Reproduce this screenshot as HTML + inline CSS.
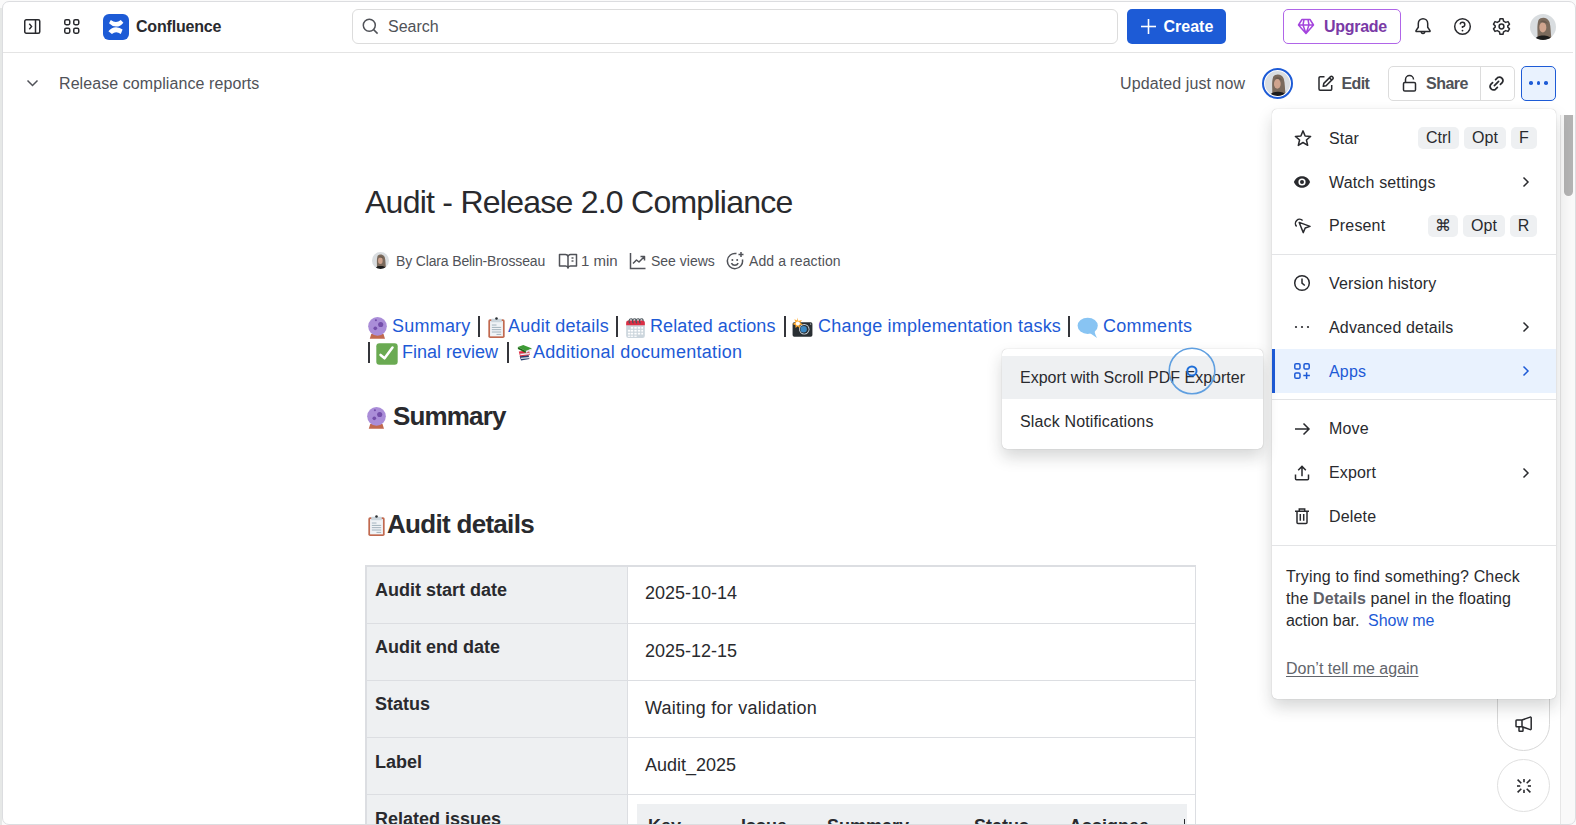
<!DOCTYPE html>
<html><head><meta charset="utf-8"><title>Audit - Release 2.0 Compliance</title>
<style>
html,body{margin:0;padding:0;}
body{width:1576px;height:825px;overflow:hidden;position:relative;background:#f7f7f7;font-family:"Liberation Sans",sans-serif;}
.t{position:absolute;white-space:nowrap;font-family:"Liberation Sans",sans-serif;}
.b{position:absolute;}
svg.b{overflow:visible;}
</style></head><body>
<div class="b" style="left:2px;top:1px;width:1574px;height:824px;background:#fff;border-radius:7px;"></div>
<div class="b" style="left:3px;top:52px;width:1570px;height:1px;background:#e4e4e4;"></div>
<svg class="b" style="left:23px;top:18px;" width="18" height="17" viewBox="0 0 18 17"><rect x="1.75" y="1.75" width="15" height="13.5" rx="1.5" fill="none" stroke="#292a2e" stroke-width="1.5"/><line x1="12.5" y1="1.75" x2="12.5" y2="15.25" stroke="#292a2e" stroke-width="1.5"/><path d="M6.3 5.7 L8.6 8.5 L6.3 11.3" fill="none" stroke="#292a2e" stroke-width="1.4"/></svg>
<svg class="b" style="left:63px;top:18px;" width="18" height="17" viewBox="0 0 18 17"><rect x="1.75" y="1.75" width="5" height="5" rx="1.4" fill="none" stroke="#292a2e" stroke-width="1.5"/><rect x="1.75" y="10.25" width="5" height="5" rx="1.4" fill="none" stroke="#292a2e" stroke-width="1.5"/><rect x="10.75" y="1.75" width="5" height="5" rx="1.4" fill="none" stroke="#292a2e" stroke-width="1.5"/><rect x="10.75" y="10.25" width="5" height="5" rx="1.4" fill="none" stroke="#292a2e" stroke-width="1.5"/></svg>
<div class="b" style="left:102.7px;top:13.7px;width:26px;height:26px;background:#1d5bd6;border-radius:6px;"></div>
<svg class="b" style="left:102.7px;top:13.7px;" width="26" height="26" viewBox="0 0 26 26"><path d="M6 9.3 L7.8 6 Q13 10 17.8 6 L20.4 8.7 Q17 12.8 13 12.6 Q9 12.4 6 9.3 Z" fill="#fff"/><path d="M5.4 17.3 Q9 13 13.2 13.2 Q17 13.4 19.6 15.6 L17.8 20 Q13 16.5 8.9 20 Z" fill="#fff"/></svg>
<div class="t" style="left:136px;top:17px;font-size:16px;line-height:20px;color:#292a2e;font-weight:700;letter-spacing:-0.2px;">Confluence</div>
<div class="b" style="left:352px;top:9px;width:766px;height:35px;border:1px solid #dcdcdc;border-radius:6px;box-sizing:border-box;"></div>
<svg class="b" style="left:362px;top:18px;" width="17" height="17" viewBox="0 0 17 17"><circle cx="7.3" cy="7.3" r="6" fill="none" stroke="#505258" stroke-width="1.5"/><line x1="11.6" y1="11.6" x2="15.6" y2="15.6" stroke="#505258" stroke-width="1.5"/></svg>
<div class="t" style="left:388px;top:17px;font-size:16px;line-height:20px;color:#505258;">Search</div>
<div class="b" style="left:1127px;top:9px;width:99px;height:35px;background:#1d5bd6;border-radius:5px;"></div>
<svg class="b" style="left:1140px;top:18px;" width="17" height="17" viewBox="0 0 17 17"><line x1="8.5" y1="1" x2="8.5" y2="16" stroke="#fff" stroke-width="1.6"/><line x1="1" y1="8.5" x2="16" y2="8.5" stroke="#fff" stroke-width="1.6"/></svg>
<div class="t" style="left:1163.5px;top:17px;font-size:16px;line-height:20px;color:#fff;font-weight:700;">Create</div>
<div class="b" style="left:1283px;top:9px;width:118px;height:35px;border:1px solid #b065e8;border-radius:5px;box-sizing:border-box;"></div>
<svg class="b" style="left:1297px;top:18px;" width="18" height="17" viewBox="0 0 18 17"><path d="M5 1.5 H13 L16.5 7 L9 15.5 L1.5 7 Z M1.5 7 H16.5 M7 1.5 L6 7 L9 15.5 L12 7 L11 1.5" fill="none" stroke="#a444dd" stroke-width="1.5" stroke-linejoin="round"/></svg>
<div class="t" style="left:1324px;top:17px;font-size:16px;line-height:20px;color:#7a3aa6;font-weight:700;letter-spacing:-0.3px;">Upgrade</div>
<svg class="b" style="left:1414px;top:17px;" width="18" height="19" viewBox="0 0 18 19"><path d="M4.3 10.3 V6.4 A4.7 4.7 0 0 1 13.7 6.4 V10.3 L16 13.6 V14.4 H2 V13.6 Z" fill="none" stroke="#292a2e" stroke-width="1.5" stroke-linejoin="round"/><path d="M7.2 14.6 A1.8 1.8 0 0 0 10.8 14.6" fill="none" stroke="#292a2e" stroke-width="1.5"/></svg>
<svg class="b" style="left:1453px;top:17px;" width="19" height="19" viewBox="0 0 19 19"><circle cx="9.5" cy="9.5" r="7.8" fill="none" stroke="#292a2e" stroke-width="1.5"/><path d="M7.2 7.4 A2.3 2.3 0 1 1 9.5 9.8 V11" fill="none" stroke="#292a2e" stroke-width="1.5"/><circle cx="9.5" cy="13.6" r="0.9" fill="#292a2e"/></svg>
<svg class="b" style="left:1492px;top:17px;" width="19" height="19" viewBox="0 0 19 19"><path d="M8 1.8 H11 L11.6 4.2 L13.7 5.4 L16 4.6 L17.5 7.2 L15.8 8.9 V10.1 L17.5 11.8 L16 14.4 L13.7 13.6 L11.6 14.8 L11 17.2 H8 L7.4 14.8 L5.3 13.6 L3 14.4 L1.5 11.8 L3.2 10.1 V8.9 L1.5 7.2 L3 4.6 L5.3 5.4 L7.4 4.2 Z" fill="none" stroke="#292a2e" stroke-width="1.5" stroke-linejoin="round"/><circle cx="9.5" cy="9.5" r="2.4" fill="none" stroke="#292a2e" stroke-width="1.5"/></svg>
<svg class="b" style="left:1530px;top:14px;" width="26" height="26" viewBox="0 0 26 26"><defs><clipPath id="c15300"><circle cx="13" cy="13" r="13"/></clipPath></defs><g clip-path="url(#c15300)"><rect width="26" height="26" fill="#d9dde0"/><path d="M8.5 6 C11 2.5 17.5 2.8 19.5 8 C21 13 20.5 19 21.5 25 L7.5 25 C8 19 6.5 12 8.5 6 Z" fill="#7a6a5c"/><ellipse cx="12.8" cy="13.4" rx="3.5" ry="5" fill="#d0a48e"/><path d="M10 7.5 C12.5 5.5 17 6.5 17.8 10 C16 8.5 12.5 8 10 7.5 Z" fill="#6a5a4e"/><path d="M4.5 27 C5.5 22.5 9 21.5 13 21.5 C17.5 21.5 21 22.5 22.5 27 Z" fill="#1c1c1c"/></g></svg>
<svg class="b" style="left:26px;top:78px;" width="13" height="10" viewBox="0 0 13 10"><path d="M1.5 2.5 L6.5 7.5 L11.5 2.5" fill="none" stroke="#505258" stroke-width="1.5"/></svg>
<div class="t" style="left:59px;top:74px;font-size:16px;line-height:20px;color:#505258;letter-spacing:0.08px;">Release compliance reports</div>
<div class="t" style="left:1120px;top:74px;font-size:16px;line-height:20px;color:#505258;letter-spacing:0.1px;">Updated just now</div>
<div class="b" style="left:1262px;top:68px;width:31px;height:31px;border:2px solid #1d5bd6;border-radius:50%;box-sizing:border-box;"></div>
<svg class="b" style="left:1265px;top:71px;" width="25" height="25" viewBox="0 0 26 26"><defs><clipPath id="c12650"><circle cx="13" cy="13" r="13"/></clipPath></defs><g clip-path="url(#c12650)"><rect width="26" height="26" fill="#d9dde0"/><path d="M8.5 6 C11 2.5 17.5 2.8 19.5 8 C21 13 20.5 19 21.5 25 L7.5 25 C8 19 6.5 12 8.5 6 Z" fill="#7a6a5c"/><ellipse cx="12.8" cy="13.4" rx="3.5" ry="5" fill="#d0a48e"/><path d="M10 7.5 C12.5 5.5 17 6.5 17.8 10 C16 8.5 12.5 8 10 7.5 Z" fill="#6a5a4e"/><path d="M4.5 27 C5.5 22.5 9 21.5 13 21.5 C17.5 21.5 21 22.5 22.5 27 Z" fill="#1c1c1c"/></g></svg>
<svg class="b" style="left:1317px;top:74px;" width="18" height="18" viewBox="0 0 18 18"><path d="M7.5 2.8 H3.2 A1.2 1.2 0 0 0 2 4 V15 A1.2 1.2 0 0 0 3.2 16.2 H13.5 A1.2 1.2 0 0 0 14.7 15 V11" fill="none" stroke="#292a2e" stroke-width="1.5"/><path d="M6.2 12.3 L6.8 9.4 L13.6 2.6 A1.2 1.2 0 0 1 15.3 2.6 L15.9 3.2 A1.2 1.2 0 0 1 15.9 4.9 L9.1 11.7 Z M12.4 3.8 L14.7 6.1" fill="none" stroke="#292a2e" stroke-width="1.5" stroke-linejoin="round"/></svg>
<div class="t" style="left:1341.5px;top:74px;font-size:16px;line-height:20px;color:#505258;font-weight:700;letter-spacing:-0.6px;">Edit</div>
<div class="b" style="left:1388px;top:66px;width:127px;height:35px;border:1px solid #dcdcdc;border-radius:5px;box-sizing:border-box;"></div>
<div class="b" style="left:1480px;top:67px;width:1px;height:33px;background:#dcdcdc;"></div>
<svg class="b" style="left:1401px;top:74px;" width="17" height="19" viewBox="0 0 17 19"><path d="M4.5 8.5 V5.5 A4 4 0 0 1 12.5 5.5" fill="none" stroke="#292a2e" stroke-width="1.5"/><rect x="2.5" y="8.5" width="12" height="8.5" rx="1.3" fill="none" stroke="#292a2e" stroke-width="1.5"/></svg>
<div class="t" style="left:1426px;top:74px;font-size:16px;line-height:20px;color:#505258;font-weight:700;letter-spacing:-0.5px;">Share</div>
<svg class="b" style="left:1488px;top:74.5px;" width="17" height="17" viewBox="0 0 17 17"><g fill="none" stroke="#292a2e" stroke-width="1.7" stroke-linecap="round"><path d="M6.4 10.6 L10.6 6.4"/><path d="M7.6 4.6 L9.6 2.6 A3.5 3.5 0 0 1 14.4 7.4 L12.4 9.4"/><path d="M9.4 12.4 L7.4 14.4 A3.5 3.5 0 0 1 2.6 9.6 L4.6 7.6"/></g></svg>
<div class="b" style="left:1521px;top:66px;width:35px;height:35px;background:#e9f2fe;border:1px solid #1d5bd6;border-radius:5px;box-sizing:border-box;"></div>
<div class="b" style="left:1529.25px;top:81.25px;width:3.5px;height:3.5px;background:#1d5bd6;border-radius:50%;"></div>
<div class="b" style="left:1536.75px;top:81.25px;width:3.5px;height:3.5px;background:#1d5bd6;border-radius:50%;"></div>
<div class="b" style="left:1544.25px;top:81.25px;width:3.5px;height:3.5px;background:#1d5bd6;border-radius:50%;"></div>
<div class="t" style="left:365px;top:182px;font-size:32px;line-height:40px;color:#292a2e;letter-spacing:-0.75px;">Audit - Release 2.0 Compliance</div>
<svg class="b" style="left:372px;top:252px;" width="17" height="17" viewBox="0 0 26 26"><defs><clipPath id="c3720"><circle cx="13" cy="13" r="13"/></clipPath></defs><g clip-path="url(#c3720)"><rect width="26" height="26" fill="#d9dde0"/><path d="M8.5 6 C11 2.5 17.5 2.8 19.5 8 C21 13 20.5 19 21.5 25 L7.5 25 C8 19 6.5 12 8.5 6 Z" fill="#7a6a5c"/><ellipse cx="12.8" cy="13.4" rx="3.5" ry="5" fill="#d0a48e"/><path d="M10 7.5 C12.5 5.5 17 6.5 17.8 10 C16 8.5 12.5 8 10 7.5 Z" fill="#6a5a4e"/><path d="M4.5 27 C5.5 22.5 9 21.5 13 21.5 C17.5 21.5 21 22.5 22.5 27 Z" fill="#1c1c1c"/></g></svg>
<div class="t" style="left:396px;top:252px;font-size:14px;line-height:18px;color:#505258;letter-spacing:-0.15px;">By Clara Belin-Brosseau</div>
<svg class="b" style="left:558px;top:252px;" width="20" height="18" viewBox="0 0 20 18"><path d="M1.5 2.5 H7.5 A2.5 2.5 0 0 1 10 5 V16 A2.5 2.5 0 0 0 7.5 14 H1.5 Z M18.5 2.5 H12.5 A2.5 2.5 0 0 0 10 5 V16 A2.5 2.5 0 0 1 12.5 14 H18.5 Z" fill="none" stroke="#505258" stroke-width="1.5" stroke-linejoin="round"/><line x1="13.5" y1="6" x2="15.5" y2="6" stroke="#505258" stroke-width="1.4"/><line x1="13.5" y1="9" x2="15.5" y2="9" stroke="#505258" stroke-width="1.4"/></svg>
<div class="t" style="left:581px;top:251px;font-size:15px;line-height:19px;color:#505258;">1 min</div>
<svg class="b" style="left:629px;top:252px;" width="18" height="18" viewBox="0 0 18 18"><path d="M1.5 1 V16.5 H16.5" fill="none" stroke="#505258" stroke-width="1.5"/><path d="M4 11.5 L7.5 8 L10 10 L15 5 M11.5 4.5 H15.5 V8.5" fill="none" stroke="#505258" stroke-width="1.5" stroke-linejoin="round"/></svg>
<div class="t" style="left:651px;top:252px;font-size:14px;line-height:18px;color:#505258;">See views</div>
<svg class="b" style="left:725px;top:251px;" width="20" height="20" viewBox="0 0 20 20"><path d="M11.5 2.6 A7.6 7.6 0 1 0 17.4 8.5" fill="none" stroke="#505258" stroke-width="1.5"/><circle cx="7.4" cy="9" r="1" fill="#505258"/><circle cx="12.2" cy="9" r="1" fill="#505258"/><path d="M6.4 12.2 A3.8 3.8 0 0 0 13.2 12.2" fill="none" stroke="#505258" stroke-width="1.5"/><path d="M16 1 V6 M13.5 3.5 H18.5" stroke="#505258" stroke-width="1.5"/></svg>
<div class="t" style="left:749px;top:252px;font-size:14px;line-height:18px;color:#505258;letter-spacing:0.1px;">Add a reaction</div>
<svg class="b" style="left:366.5px;top:317px;" width="22" height="22" viewBox="0 0 36 36"><path d="M7 28 H27 L29.5 35.5 H4.5 Z" fill="#c1694f"/><circle cx="17.2" cy="15.2" r="15.3" fill="#aa8dd8"/><circle cx="22.4" cy="12.2" r="4.2" fill="#744eaa"/><circle cx="13.6" cy="18.5" r="3" fill="#744eaa"/><circle cx="14.6" cy="5.2" r="1.7" fill="#744eaa"/></svg>
<div class="t" style="left:392px;top:315px;font-size:18px;line-height:22px;color:#1d5ad6;letter-spacing:0.22px;">Summary</div>
<div class="b" style="left:478px;top:316px;width:1.5px;height:21px;background:#34353a;"></div>
<svg class="b" style="left:486px;top:317px;" width="21" height="21" viewBox="0 0 36 36"><rect x="4" y="4" width="28" height="32" rx="3" fill="#c1694f"/><rect x="7" y="7" width="22" height="26" fill="#fff"/><rect x="7" y="7" width="22" height="26" fill="#e1e8ed" opacity=".5"/><rect x="9" y="3" width="18" height="6" rx="1" fill="#ccd6dd"/><circle cx="18" cy="2.5" r="2.2" fill="#292f33"/><g fill="#99aab5"><rect x="10" y="13" width="8" height="1.5"/><rect x="10" y="17" width="16" height="1.5"/><rect x="10" y="21" width="16" height="1.5"/><rect x="10" y="25" width="16" height="1.5"/><rect x="18" y="29" width="8" height="1.5"/></g></svg>
<div class="t" style="left:508px;top:315px;font-size:18px;line-height:22px;color:#1d5ad6;letter-spacing:0.22px;">Audit details</div>
<div class="b" style="left:616px;top:316px;width:1.5px;height:21px;background:#34353a;"></div>
<svg class="b" style="left:625px;top:317px;" width="21" height="21" viewBox="0 0 36 36"><rect x="2" y="6" width="32" height="30" rx="4" fill="#ccd6dd"/><path d="M2 10 A4 4 0 0 1 6 6 H30 A4 4 0 0 1 34 10 V14 H2 Z" fill="#dd2e44"/><g fill="#fff"><rect x="10" y="17" width="4" height="3"/><rect x="16" y="17" width="4" height="3"/><rect x="22" y="17" width="4" height="3"/><rect x="28" y="17" width="3" height="3"/><rect x="5" y="22" width="4" height="3"/><rect x="10" y="22" width="4" height="3"/><rect x="16" y="22" width="4" height="3"/><rect x="22" y="22" width="4" height="3"/><rect x="28" y="22" width="3" height="3"/><rect x="5" y="27" width="4" height="3"/><rect x="10" y="27" width="4" height="3"/><rect x="16" y="27" width="4" height="3"/><rect x="22" y="27" width="4" height="3"/><rect x="28" y="27" width="3" height="3"/><rect x="5" y="32" width="4" height="2"/><rect x="10" y="32" width="4" height="2"/><rect x="16" y="32" width="4" height="2"/></g><g fill="none" stroke="#4b545b" stroke-width="2"><path d="M8.5 11 C5.5 8 7 3 10.5 3 C13 3 13.5 6 12.5 7"/><path d="M14.5 11 C11.5 8 13 3 16.5 3 C19 3 19.5 6 18.5 7"/><path d="M20.5 11 C17.5 8 19 3 22.5 3 C25 3 25.5 6 24.5 7"/><path d="M26.5 11 C23.5 8 25 3 28.5 3 C31 3 31.5 6 30.5 7"/></g></svg>
<div class="t" style="left:650px;top:315px;font-size:18px;line-height:22px;color:#1d5ad6;letter-spacing:0.1px;">Related actions</div>
<div class="b" style="left:784px;top:316px;width:1.5px;height:21px;background:#34353a;"></div>
<svg class="b" style="left:792px;top:317px;" width="21" height="21" viewBox="0 0 36 36"><rect x="1" y="9" width="34" height="25" rx="3" fill="#292f33"/><circle cx="21" cy="21" r="9" fill="#ccd6dd"/><circle cx="21" cy="21" r="7.5" fill="#292f33"/><circle cx="20" cy="21" r="5.5" fill="#3b88c3"/><circle cx="32" cy="12" r="1" fill="#fff"/><path d="M9 1 L11 7 L17 5 L14 10 L19 13 L13 14 L14 20 L10 16 L6 19 L6 14 L1 12 L6 9 L4 4 L9 6 Z" fill="#ffac33"/><circle cx="10" cy="11" r="3.5" fill="#fff"/></svg>
<div class="t" style="left:818px;top:315px;font-size:18px;line-height:22px;color:#1d5ad6;letter-spacing:0.22px;">Change implementation tasks</div>
<div class="b" style="left:1068px;top:316px;width:1.5px;height:21px;background:#34353a;"></div>
<svg class="b" style="left:1077px;top:317px;" width="22" height="22" viewBox="0 0 36 36"><ellipse cx="17.5" cy="14.5" rx="16.5" ry="13.3" fill="#88c4f3"/><path d="M19 25 C24 28 29 32 33 34.5 C30 30 29 26 28.5 21 Z" fill="#88c4f3"/></svg>
<div class="t" style="left:1103px;top:315px;font-size:18px;line-height:22px;color:#1d5ad6;letter-spacing:0.28px;">Comments</div>
<div class="b" style="left:368px;top:342px;width:1.5px;height:21px;background:#34353a;"></div>
<svg class="b" style="left:376px;top:343px;" width="22" height="22" viewBox="0 0 36 36"><rect x="0.5" y="0.5" width="35" height="35" rx="5" fill="#6aaa52"/><path d="M7.5 19.5 L14 25 L27 7.5" fill="none" stroke="#fff" stroke-width="4.2" stroke-linecap="round" stroke-linejoin="round"/></svg>
<div class="t" style="left:402px;top:341px;font-size:18px;line-height:22px;color:#1d5ad6;letter-spacing:0px;">Final review</div>
<div class="b" style="left:507px;top:342px;width:1.5px;height:21px;background:#34353a;"></div>
<svg class="b" style="left:516.5px;top:343.5px;" width="16" height="16" viewBox="0 0 36 36"><path d="M6 27 L26 25 L28 34 L9 37 Z" fill="#2a3f6e"/><path d="M9 31 L27 29 L27.5 32 L9.5 34 Z" fill="#e1e8ed"/><path d="M4 17 L27 14 L29 25 L7 28 Z" fill="#dd2e44"/><path d="M7 21.5 L28 19 L28.5 23 L7.5 25.5 Z" fill="#f5f8fa"/><path d="M7 22 L28 19.5" stroke="#a0041e" stroke-width="0.8"/><path d="M2 7 L14 2 L34 10 L20 16 Z" fill="#3d9b35"/><path d="M2 7 L2 11 L20 20 L20 16 Z" fill="#1e6b18"/><path d="M20 16 L34 10 L34 13 L20 20 Z" fill="#e1e8ed"/></svg>
<div class="t" style="left:533px;top:341px;font-size:18px;line-height:22px;color:#1d5ad6;letter-spacing:0.3px;">Additional documentation</div>
<svg class="b" style="left:366px;top:407px;" width="22" height="22" viewBox="0 0 36 36"><path d="M7 28 H27 L29.5 35.5 H4.5 Z" fill="#c1694f"/><circle cx="17.2" cy="15.2" r="15.3" fill="#aa8dd8"/><circle cx="22.4" cy="12.2" r="4.2" fill="#744eaa"/><circle cx="13.6" cy="18.5" r="3" fill="#744eaa"/><circle cx="14.6" cy="5.2" r="1.7" fill="#744eaa"/></svg>
<div class="t" style="left:393px;top:400px;font-size:26px;line-height:32px;color:#292a2e;font-weight:700;letter-spacing:-0.85px;">Summary</div>
<svg class="b" style="left:366px;top:515px;" width="21" height="21" viewBox="0 0 36 36"><rect x="4" y="4" width="28" height="32" rx="3" fill="#c1694f"/><rect x="7" y="7" width="22" height="26" fill="#fff"/><rect x="7" y="7" width="22" height="26" fill="#e1e8ed" opacity=".5"/><rect x="9" y="3" width="18" height="6" rx="1" fill="#ccd6dd"/><circle cx="18" cy="2.5" r="2.2" fill="#292f33"/><g fill="#99aab5"><rect x="10" y="13" width="8" height="1.5"/><rect x="10" y="17" width="16" height="1.5"/><rect x="10" y="21" width="16" height="1.5"/><rect x="10" y="25" width="16" height="1.5"/><rect x="18" y="29" width="8" height="1.5"/></g></svg>
<div class="t" style="left:387px;top:508px;font-size:26px;line-height:32px;color:#292a2e;font-weight:700;letter-spacing:-0.7px;">Audit details</div>
<div class="b" style="left:365px;top:565px;width:831px;height:270px;border:2px solid #dcdee2;border-right-width:1px;border-bottom:none;box-sizing:border-box;background:#fff;"></div>
<div class="b" style="left:367px;top:567px;width:260px;height:270px;background:#eef0f2;"></div>
<div class="b" style="left:627px;top:567px;width:1px;height:270px;background:#dcdee2;"></div>
<div class="b" style="left:367px;top:623px;width:828px;height:1px;background:#dcdee2;"></div>
<div class="b" style="left:367px;top:680px;width:828px;height:1px;background:#dcdee2;"></div>
<div class="b" style="left:367px;top:737px;width:828px;height:1px;background:#dcdee2;"></div>
<div class="b" style="left:367px;top:794px;width:828px;height:1px;background:#dcdee2;"></div>
<div class="t" style="left:375px;top:579px;font-size:18px;line-height:22px;color:#292a2e;font-weight:700;">Audit start date</div>
<div class="t" style="left:645px;top:582px;font-size:18px;line-height:22px;color:#292a2e;">2025-10-14</div>
<div class="t" style="left:375px;top:636px;font-size:18px;line-height:22px;color:#292a2e;font-weight:700;">Audit end date</div>
<div class="t" style="left:645px;top:640px;font-size:18px;line-height:22px;color:#292a2e;">2025-12-15</div>
<div class="t" style="left:375px;top:693px;font-size:18px;line-height:22px;color:#292a2e;font-weight:700;">Status</div>
<div class="t" style="left:645px;top:697px;font-size:18px;line-height:22px;color:#292a2e;letter-spacing:0.25px;">Waiting for validation</div>
<div class="t" style="left:375px;top:751px;font-size:18px;line-height:22px;color:#292a2e;font-weight:700;">Label</div>
<div class="t" style="left:645px;top:754px;font-size:18px;line-height:22px;color:#292a2e;">Audit_2025</div>
<div class="t" style="left:375px;top:808px;font-size:18px;line-height:22px;color:#292a2e;font-weight:700;">Related issues</div>
<div class="b" style="left:637px;top:804px;width:550px;height:40px;background:#eef0f2;"></div>
<div class="t" style="left:648px;top:815px;font-size:18px;line-height:22px;color:#292a2e;font-weight:700;">Key</div>
<div class="t" style="left:741px;top:815px;font-size:18px;line-height:22px;color:#292a2e;font-weight:700;">Issue</div>
<div class="t" style="left:827px;top:815px;font-size:18px;line-height:22px;color:#292a2e;font-weight:700;">Summary</div>
<div class="t" style="left:974px;top:815px;font-size:18px;line-height:22px;color:#292a2e;font-weight:700;">Status</div>
<div class="t" style="left:1069px;top:815px;font-size:18px;line-height:22px;color:#292a2e;font-weight:700;">Assignee</div>
<div class="b" style="left:1184px;top:819px;width:1px;height:10px;background:#292a2e;"></div>
<div class="b" style="left:1560px;top:115px;width:15px;height:709px;background:#f9f9f9;border-left:1px solid #e6e6e6;box-sizing:border-box;"></div>
<div class="b" style="left:1564px;top:115px;width:9px;height:81px;background:#b3b3b3;border-radius:0 0 4.5px 4.5px;"></div>
<div class="b" style="left:1497px;top:600px;width:53px;height:151px;border:1px solid #d8d8d8;border-radius:26.5px;background:#fff;box-sizing:border-box;"></div>
<svg class="b" style="left:1514px;top:714px;" width="20" height="20" viewBox="0 0 20 20"><path d="M2.8 6 H8 L16.2 3.1 A0.8 0.8 0 0 1 17.2 3.9 V14.8 A0.8 0.8 0 0 1 16.2 15.6 L8 12.7 H2.8 A0.8 0.8 0 0 1 2 11.9 V6.8 A0.8 0.8 0 0 1 2.8 6 Z M8 6 V12.7" fill="none" stroke="#292a2e" stroke-width="1.5" stroke-linejoin="round"/><path d="M5 12.7 V16.7 A0.6 0.6 0 0 0 5.6 17.3 H8.4 A0.6 0.6 0 0 0 9 16.7 V12.7" fill="none" stroke="#292a2e" stroke-width="1.5"/></svg>
<div class="b" style="left:1497px;top:759px;width:53px;height:53px;border:1px solid #e0e0e0;border-radius:50%;background:#fff;box-sizing:border-box;"></div>
<svg class="b" style="left:1513.5px;top:775.5px;" width="20" height="20" viewBox="0 0 20 20"><g stroke="#292a2e" stroke-width="1.6" stroke-linecap="butt"><line x1="10" y1="3" x2="10" y2="6.2"/><line x1="10" y1="13.8" x2="10" y2="17"/><line x1="3" y1="10" x2="6.2" y2="10"/><line x1="13.8" y1="10" x2="17" y2="10"/><line x1="3.6" y1="3.6" x2="7.3" y2="7.3"/><line x1="12.7" y1="12.7" x2="16.4" y2="16.4"/><line x1="3.6" y1="16.4" x2="7.3" y2="12.7"/><line x1="12.7" y1="7.3" x2="16.4" y2="3.6"/></g></svg>
<div class="b" style="left:1272px;top:109px;width:284px;height:590px;background:#fff;border-radius:5px;box-shadow:0 0 1px rgba(30,31,33,.35),0 8px 16px rgba(30,31,33,.18);"></div>
<div class="t" style="left:1329px;top:129px;font-size:16px;line-height:20px;color:#292a2e;letter-spacing:0.16px;">Star</div>
<svg class="b" style="left:1294px;top:129.6px;" width="18" height="18" viewBox="0 0 18 18"><path d="M9 0.9 L11.12 5.99 L16.61 6.43 L12.42 10.01 L13.7 15.37 L9 12.5 L4.3 15.37 L5.58 10.01 L1.39 6.43 L6.88 5.99 Z" fill="none" stroke="#292a2e" stroke-width="1.5" stroke-linejoin="round"/></svg>
<div class="b" style="left:1418px;top:127px;width:41px;height:22px;background:#eef0f2;border-radius:5px;"></div>
<div class="t" style="left:1418px;top:127px;width:41px;height:22px;line-height:22px;text-align:center;font-size:16px;color:#292a2e;">Ctrl</div>
<div class="b" style="left:1464px;top:127px;width:42px;height:22px;background:#eef0f2;border-radius:5px;"></div>
<div class="t" style="left:1464px;top:127px;width:42px;height:22px;line-height:22px;text-align:center;font-size:16px;color:#292a2e;">Opt</div>
<div class="b" style="left:1511px;top:127px;width:26px;height:22px;background:#eef0f2;border-radius:5px;"></div>
<div class="t" style="left:1511px;top:127px;width:26px;height:22px;line-height:22px;text-align:center;font-size:16px;color:#292a2e;">F</div>
<div class="t" style="left:1329px;top:173px;font-size:16px;line-height:20px;color:#292a2e;letter-spacing:0.16px;">Watch settings</div>
<svg class="b" style="left:1293px;top:173px;" width="18" height="18" viewBox="0 0 18 18"><path d="M0.9 9 C2.8 4.8 5.8 3.2 9 3.2 C12.2 3.2 15.2 4.8 17.1 9 C15.2 13.2 12.2 14.8 9 14.8 C5.8 14.8 2.8 13.2 0.9 9 Z" fill="#292a2e"/><circle cx="9" cy="9" r="3.6" fill="#fff"/><circle cx="9" cy="9" r="2" fill="#292a2e"/></svg>
<svg class="b" style="left:1521px;top:176px;" width="10" height="12" viewBox="0 0 10 12"><path d="M2.5 1.5 L7 6 L2.5 10.5" fill="none" stroke="#292a2e" stroke-width="1.5"/></svg>
<div class="t" style="left:1329px;top:216px;font-size:16px;line-height:20px;color:#292a2e;letter-spacing:0.16px;">Present</div>
<svg class="b" style="left:1293px;top:216px;" width="18" height="18" viewBox="0 0 18 18"><path d="M6.2 6.4 L17 10.4 L12.2 12 L10.2 16.6 Z" fill="none" stroke="#292a2e" stroke-width="1.5" stroke-linejoin="round"/><path d="M3.6 10.4 A3.9 3.9 0 1 1 9.6 4.6" fill="none" stroke="#292a2e" stroke-width="1.5"/></svg>
<div class="b" style="left:1428px;top:215px;width:30px;height:22px;background:#eef0f2;border-radius:5px;"></div>
<div class="t" style="left:1428px;top:215px;width:30px;height:22px;line-height:22px;text-align:center;font-size:16px;color:#292a2e;">&#8984;</div>
<div class="b" style="left:1463px;top:215px;width:42px;height:22px;background:#eef0f2;border-radius:5px;"></div>
<div class="t" style="left:1463px;top:215px;width:42px;height:22px;line-height:22px;text-align:center;font-size:16px;color:#292a2e;">Opt</div>
<div class="b" style="left:1510px;top:215px;width:27px;height:22px;background:#eef0f2;border-radius:5px;"></div>
<div class="t" style="left:1510px;top:215px;width:27px;height:22px;line-height:22px;text-align:center;font-size:16px;color:#292a2e;">R</div>
<div class="b" style="left:1272px;top:254px;width:284px;height:1px;background:#e3e4e6;"></div>
<div class="t" style="left:1329px;top:274px;font-size:16px;line-height:20px;color:#292a2e;letter-spacing:0.16px;">Version history</div>
<svg class="b" style="left:1293px;top:274px;" width="18" height="18" viewBox="0 0 18 18"><circle cx="9" cy="9" r="7.3" fill="none" stroke="#292a2e" stroke-width="1.5"/><path d="M9 4.5 V9.2 L11.8 11.5" fill="none" stroke="#292a2e" stroke-width="1.5"/></svg>
<div class="t" style="left:1329px;top:318px;font-size:16px;line-height:20px;color:#292a2e;letter-spacing:0.16px;">Advanced details</div>
<svg class="b" style="left:1293px;top:318px;" width="18" height="18" viewBox="0 0 18 18"><circle cx="3" cy="9" r="1.1" fill="#292a2e"/><circle cx="9" cy="9" r="1.1" fill="#292a2e"/><circle cx="15" cy="9" r="1.1" fill="#292a2e"/></svg>
<svg class="b" style="left:1521px;top:321px;" width="10" height="12" viewBox="0 0 10 12"><path d="M2.5 1.5 L7 6 L2.5 10.5" fill="none" stroke="#292a2e" stroke-width="1.5"/></svg>
<div class="b" style="left:1272px;top:349px;width:284px;height:44px;background:#e9f2fe;"></div>
<div class="b" style="left:1272px;top:349px;width:2.5px;height:44px;background:#1d5ad6;"></div>
<div class="t" style="left:1329px;top:362px;font-size:16px;line-height:20px;color:#1d5ad6;letter-spacing:0.16px;">Apps</div>
<svg class="b" style="left:1293px;top:362px;" width="18" height="18" viewBox="0 0 18 18"><rect x="1.8" y="1.8" width="5.2" height="5.2" rx="1.3" fill="none" stroke="#1d5ad6" stroke-width="1.5"/><rect x="11" y="1.8" width="5.2" height="5.2" rx="1.3" fill="none" stroke="#1d5ad6" stroke-width="1.5"/><rect x="1.8" y="11" width="5.2" height="5.2" rx="1.3" fill="none" stroke="#1d5ad6" stroke-width="1.5"/><path d="M13.6 10.3 V16.9 M10.3 13.6 H16.9" stroke="#1d5ad6" stroke-width="1.5"/></svg>
<svg class="b" style="left:1521px;top:365px;" width="10" height="12" viewBox="0 0 10 12"><path d="M2.5 1.5 L7 6 L2.5 10.5" fill="none" stroke="#1d5ad6" stroke-width="1.5"/></svg>
<div class="b" style="left:1272px;top:399px;width:284px;height:1px;background:#e3e4e6;"></div>
<div class="t" style="left:1329px;top:419px;font-size:16px;line-height:20px;color:#292a2e;letter-spacing:0.16px;">Move</div>
<svg class="b" style="left:1293px;top:420px;" width="18" height="18" viewBox="0 0 18 18"><path d="M2 9 H16 M10.5 3.5 L16 9 L10.5 14.5" fill="none" stroke="#292a2e" stroke-width="1.5"/></svg>
<div class="t" style="left:1329px;top:463px;font-size:16px;line-height:20px;color:#292a2e;letter-spacing:0.16px;">Export</div>
<svg class="b" style="left:1293px;top:464px;" width="18" height="18" viewBox="0 0 18 18"><path d="M9 12.3 V2.5 M5.2 6.2 L9 2.4 L12.8 6.2" fill="none" stroke="#292a2e" stroke-width="1.5"/><path d="M2.5 10.5 V14.8 A1 1 0 0 0 3.5 15.8 H14.5 A1 1 0 0 0 15.5 14.8 V10.5" fill="none" stroke="#292a2e" stroke-width="1.5"/></svg>
<svg class="b" style="left:1521px;top:467px;" width="10" height="12" viewBox="0 0 10 12"><path d="M2.5 1.5 L7 6 L2.5 10.5" fill="none" stroke="#292a2e" stroke-width="1.5"/></svg>
<div class="t" style="left:1329px;top:507px;font-size:16px;line-height:20px;color:#292a2e;letter-spacing:0.16px;">Delete</div>
<svg class="b" style="left:1293px;top:507px;" width="18" height="18" viewBox="0 0 18 18"><path d="M2 4.3 H16 M6.3 4.3 V2 H11.7 V4.3" fill="none" stroke="#292a2e" stroke-width="1.5"/><path d="M4 4.3 V15.6 A1 1 0 0 0 5 16.6 H13 A1 1 0 0 0 14 15.6 V4.3" fill="none" stroke="#292a2e" stroke-width="1.5"/><path d="M7.3 7 V13.8 M10.7 7 V13.8" stroke="#292a2e" stroke-width="1.5"/></svg>
<div class="b" style="left:1272px;top:545px;width:284px;height:1px;background:#e3e4e6;"></div>
<div class="t" style="left:1286px;top:567px;font-size:16px;line-height:20px;color:#292a2e;letter-spacing:0.16px;">Trying to find something? Check</div>
<div class="t" style="left:1286px;top:589px;font-size:16px;line-height:20px;color:#292a2e;letter-spacing:0.08px;">the <b style="color:#5e6068">Details</b> panel in the floating</div>
<div class="t" style="left:1286px;top:611px;font-size:16px;line-height:20px;color:#292a2e;letter-spacing:-0.05px;">action bar. &nbsp;<span style="color:#1d5ad6">Show me</span></div>
<div class="t" style="left:1286px;top:659px;font-size:16px;line-height:20px;color:#62656c;text-decoration:underline;text-underline-offset:2px;">Don&#8217;t tell me again</div>
<div class="b" style="left:1002px;top:349px;width:261px;height:100px;background:#fff;border-radius:5px;box-shadow:0 0 1px rgba(30,31,33,.35),0 8px 16px rgba(30,31,33,.18);"></div>
<div class="b" style="left:1002px;top:356px;width:261px;height:43px;background:#eef0f2;"></div>
<div class="t" style="left:1020px;top:368px;font-size:16px;line-height:20px;color:#292a2e;">Export with Scroll PDF Exporter</div>
<div class="t" style="left:1020px;top:412px;font-size:16px;line-height:20px;color:#292a2e;letter-spacing:0.15px;">Slack Notifications</div>
<svg class="b" style="left:1165px;top:344.2px;" width="54" height="54" viewBox="0 0 54 54"><circle cx="27" cy="27" r="22.8" fill="none" stroke="#5f9fe0" stroke-width="1.6"/><circle cx="26.9" cy="27" r="4.6" fill="none" stroke="#1f6fd8" stroke-width="2"/></svg>
<div class="b" style="left:2px;top:1px;width:1574px;height:824px;border:1px solid #dcdde0;border-radius:7px;box-sizing:border-box;box-shadow:0 0 0 30px #fafafa;"></div>
<div class="b" style="left:0px;top:8px;width:2px;height:817px;background:#e6e8e7;"></div>
</body></html>
